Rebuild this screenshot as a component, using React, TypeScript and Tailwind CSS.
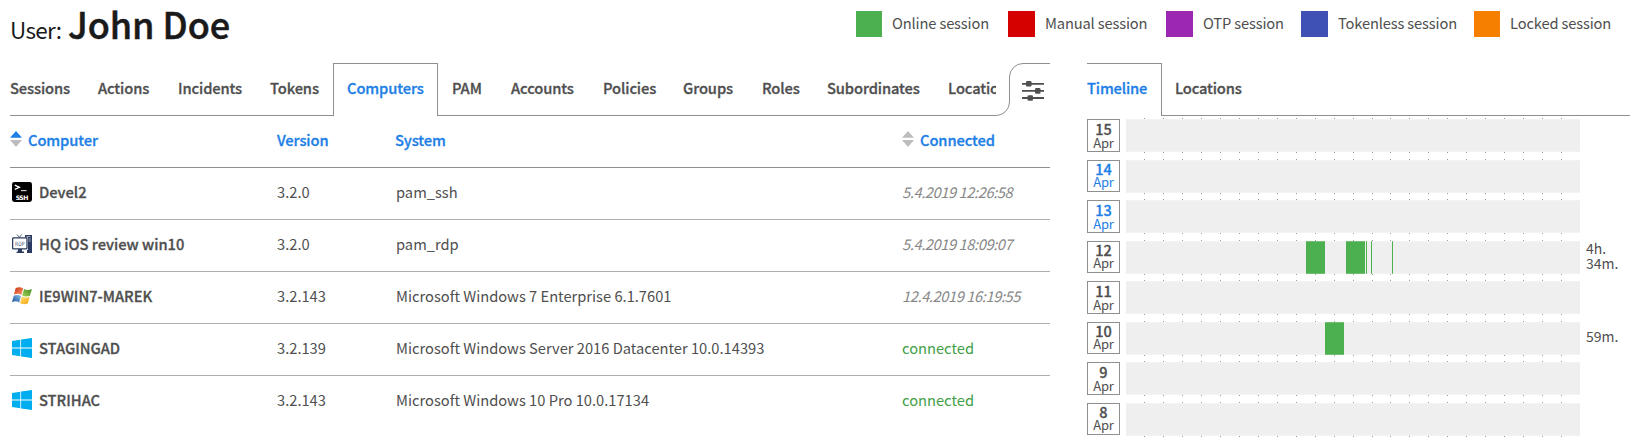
import type { ReactNode } from "react";

const legend = [
  { label: "Online session", color: "bg-[#4caf50]", box: "w-[26px]", cell: "w-[152px]" },
  { label: "Manual session", color: "bg-[#d50000]", box: "w-[27px]", cell: "w-[158px]" },
  { label: "OTP session", color: "bg-[#9c27b0]", box: "w-[27px]", cell: "w-[135px]" },
  { label: "Tokenless session", color: "bg-[#3f51b5]", box: "w-[27px]", cell: "w-[173px]" },
  { label: "Locked session", color: "bg-[#f77f00]", box: "w-[26px]", cell: "w-[150px]" },
];

const tabsBefore = [
  { label: "Sessions", cell: "w-[88px]" },
  { label: "Actions", cell: "w-[80px]" },
  { label: "Incidents", cell: "w-[92px]" },
  { label: "Tokens", cell: "w-[63px]" },
];

const tabsAfter = [
  { label: "PAM", cell: "w-[59px]" },
  { label: "Accounts", cell: "w-[92px]" },
  { label: "Policies", cell: "w-[80px]" },
  { label: "Groups", cell: "w-[79px]" },
  { label: "Roles", cell: "w-[65px]" },
  { label: "Subordinates", cell: "w-[121px]" },
];

function SshIcon() {
  return (
    <svg className="h-5 w-5" viewBox="0 0 20 20">
      <rect width="20" height="20" rx="2.4" fill="#000" />
      <path d="M2.8 3.2 7.4 5.3 2.8 7.4" fill="none" stroke="#fff" strokeWidth="1.3" />
      <path d="M9 8.6h5.6" stroke="#ddd" strokeWidth="1.1" />
      <text x="10.1" y="18" textAnchor="middle" fill="#fff" fontSize="6.2" fontWeight="700" textLength="12.6" fontFamily="DejaVu Sans, sans-serif">
        SSH
      </text>
    </svg>
  );
}

function RdpIcon() {
  return (
    <svg className="h-5 w-5" viewBox="0 0 20 20">
      <path d="M13 1h7v18h-5v-3h1V3.6h-3z" fill="#2b3a5e" />
      <path d="M14.5 2.6h4M16.5 5h2.2M16.5 7h2.2" stroke="#c4cbd9" strokeWidth=".8" />
      <path d="M5 .6 7.4 3.4 9.6.6" fill="none" stroke="#53607c" strokeWidth="1" />
      <rect x=".6" y="3.9" width="14.4" height="11" rx="1" fill="#fff" stroke="#2b3a5e" strokeWidth="1.3" />
      <path d="M6 15h4v2.4h2V19H4.6v-1.600H6z" fill="#2b3a5e" />
      <text x="7.8" y="11.8" textAnchor="middle" fill="#4b5878" fontSize="6" fontWeight="400" stroke="none" textLength="9.4" lengthAdjust="spacingAndGlyphs" fontFamily="DejaVu Sans, sans-serif">
        RDP
      </text>
    </svg>
  );
}

function Win7Icon() {
  return (
    <svg className="h-5 w-5" viewBox="0 0 20 20">
      <defs>
        <linearGradient id="w7r" x1="0" y1="0" x2="1" y2="1">
          <stop offset="0" stopColor="#cf2a10" />
          <stop offset="1" stopColor="#f6a070" />
        </linearGradient>
        <linearGradient id="w7g" x1="1" y1="0" x2="0" y2="1">
          <stop offset="0" stopColor="#3f8a1c" />
          <stop offset="1" stopColor="#a5d35c" />
        </linearGradient>
        <linearGradient id="w7b" x1="0" y1="1" x2="1" y2="0">
          <stop offset="0" stopColor="#174f97" />
          <stop offset="1" stopColor="#8cc3ee" />
        </linearGradient>
        <linearGradient id="w7y" x1="0" y1="0" x2="1" y2="1">
          <stop offset="0" stopColor="#ffe278" />
          <stop offset="1" stopColor="#f3a40c" />
        </linearGradient>
      </defs>
      <path d="M3.7 2.1C6.3.8 8.7.8 11.2 2.4L9.3 9C6.9 7.5 4.4 7.6 1.9 8.7z" fill="url(#w7r)" />
      <path d="M12.1 2.900C14.5 4.300 17 4.200 19.900 3L18 9.700C15.500 10.800 12.800 10.900 10.200 9.500z" fill="url(#w7g)" />
      <path d="M1.700 9.700C4.200 8.600 6.700 8.600 9 10L7.200 16.500C4.800 15 2.500 15.100 0 16.200z" fill="url(#w7b)" />
      <path d="M9.900 10.600C12.400 11.900 15 11.800 17.700 10.700L15.800 17.400C13.200 18.600 10.500 18.500 8 17z" fill="url(#w7y)" />
    </svg>
  );
}

function Win10Icon() {
  return (
    <svg className="h-5 w-5" viewBox="0 0 20 20" fill="#00adef">
      <path d="M0 2.900 8.300 1.700V9.500H0zM9.100 1.600 20 0V9.500H9.100zM0 10.500H8.300V18.300L0 17.100zM9.100 10.500H20V20L9.100 18.400z" />
    </svg>
  );
}

function SortIcon({ active }: { active?: boolean }) {
  return (
    <svg className="mt-px h-4 w-3" viewBox="0 0 12 16">
      <path d="M6 0 12 6.800H0z" fill={active ? "#1e80e6" : "#bdbdbd"} />
      <path d="M0 9H12L6 16z" fill="#bdbdbd" />
    </svg>
  );
}

interface Computer {
  icon: ReactNode;
  name: string;
  version: string;
  system: string;
  connected: string;
  online?: boolean;
}

const computers: Computer[] = [
  { icon: <SshIcon />, name: "Devel2", version: "3.2.0", system: "pam_ssh", connected: "5.4.2019 12:26:58" },
  { icon: <RdpIcon />, name: "HQ iOS review win10", version: "3.2.0", system: "pam_rdp", connected: "5.4.2019 18:09:07" },
  { icon: <Win7Icon />, name: "IE9WIN7-MAREK", version: "3.2.143", system: "Microsoft Windows 7 Enterprise 6.1.7601", connected: "12.4.2019 16:19:55" },
  { icon: <Win10Icon />, name: "STAGINGAD", version: "3.2.139", system: "Microsoft Windows Server 2016 Datacenter 10.0.14393", connected: "connected", online: true },
  { icon: <Win10Icon />, name: "STRIHAC", version: "3.2.143", system: "Microsoft Windows 10 Pro 10.0.17134", connected: "connected", online: true },
];

interface Day {
  day: number;
  weekend?: boolean;
  sessions: [number, number][];
  total: string[];
}

const days: Day[] = [
  { day: 15, sessions: [], total: [] },
  { day: 14, weekend: true, sessions: [], total: [] },
  { day: 13, weekend: true, sessions: [], total: [] },
  { day: 12, sessions: [[180, 19], [220, 19], [240, 1], [245, 1], [266, 1]], total: ["4h.", "34m."] },
  { day: 11, sessions: [], total: [] },
  { day: 10, sessions: [[199, 19]], total: ["59m."] },
  { day: 9, sessions: [], total: [] },
  { day: 8, sessions: [], total: [] },
];

function DayChart({ sessions }: { sessions: [number, number][] }) {
  const hours = Array.from({ length: 23 }, (_, i) => Math.round(18 + i * 18.96));
  return (
    <svg className="h-[35px] w-[454px]" viewBox="0 0 454 35" shapeRendering="crispEdges">
      <rect y="1" width="454" height="33" fill="#f3f3f3" />
      <rect y="2" width="454" height="31" fill="#efefef" />
      {hours.map((x) => (
        <g key={x} fill="#999">
          <rect x={x} y="0" width="1" height="1" />
          <rect x={x} y="34" width="1" height="1" />
        </g>
      ))}
      {sessions.map(([x, w]) => (
        <g key={x}>
          <rect x={x} y="1" width={w} height="33" fill="#70bf73" />
          <rect x={x} y="2" width={w} height="31" fill="#4caf50" />
        </g>
      ))}
    </svg>
  );
}

export default function App() {
  return (
    <div className="h-[443px] w-[1633px] overflow-hidden bg-white pl-[10px] font-['Noto_Sans_CJK_SC','Noto_Sans',sans-serif] text-[14.7px] leading-[20px] whitespace-nowrap text-[#4f4f4f]">
      <header className="flex h-[63px]">
        <h1 className="flex w-[846px] items-baseline pt-[3px] text-[#1a1a1a]">
          <span className="w-[58px] text-[22.5px] leading-[40px] tracking-[-0.7px]">User:</span>
          <span className="text-[36px] leading-[40px] font-medium tracking-[-0.05px] [-webkit-text-stroke:0.5px_#1a1a1a]">John Doe</span>
        </h1>
        <div className="flex pt-[11px]">
          {legend.map((l) => (
            <div key={l.label} className={`flex h-[26px] shrink-0 gap-[10px] ${l.cell}`}>
              <span className={`h-[26px] shrink-0 ${l.box} ${l.color}`} />
              <span className="pt-[2px] tracking-[-0.15px]">{l.label}</span>
            </div>
          ))}
        </div>
      </header>

      <div className="flex">
        <main className="w-[1040px]">
          <nav className="flex h-[53px] font-medium tracking-[-0.1px] [-webkit-text-stroke:0.3px]">
            {tabsBefore.map((t) => (
              <div key={t.label} className={`shrink-0 border-b border-[#8f8f8f] pt-[15px] ${t.cell}`}>
                {t.label}
              </div>
            ))}
            <div className="w-[105px] shrink-0 border border-b-0 border-[#8f8f8f] pt-[14px] pl-[13px] text-[#1e80e6]">Computers</div>
            <div className="flex w-[558px] shrink-0 overflow-hidden border-b border-[#8f8f8f] pt-[15px] pl-[14px]">
              {tabsAfter.map((t) => (
                <div key={t.label} className={`shrink-0 ${t.cell}`}>
                  {t.label}
                </div>
              ))}
              <div className="w-[48px] shrink-0 overflow-hidden">Locations</div>
            </div>
            <svg className="h-[53px] w-[54px] shrink-0" viewBox="0 0 54 53">
              <path d="M0 52.500A13.500 13.500 0 0 0 13.500 39V14A13.500 13.500 0 0 1 27 .500H54" fill="none" stroke="#8f8f8f" />
              <g stroke="#4f4f4f" strokeWidth="1.800">
                <path d="M26 20.800H48M26 27.900H48M26 35H48" />
              </g>
              <g fill="#4f4f4f">
                <rect x="30" y="18" width="5.500" height="5.600" rx="1.300" />
                <rect x="39" y="25.100" width="5.500" height="5.600" rx="1.300" />
                <rect x="31.500" y="32.200" width="5.500" height="5.600" rx="1.300" />
              </g>
            </svg>
          </nav>

          <div className="grid h-[52px] grid-cols-[267px_118px_507px_148px] border-b border-[#8f8f8f] pt-[14px] font-medium tracking-[-0.1px] text-[#1e80e6] [-webkit-text-stroke:0.3px]">
            <div className="flex gap-[6px]">
              <SortIcon active />
              Computer
            </div>
            <div>Version</div>
            <div>System</div>
            <div className="flex gap-[6px]">
              <SortIcon />
              Connected
            </div>
          </div>

          {computers.map((c, i) => (
            <div
              key={c.name}
              className={`grid h-[52px] grid-cols-[267px_118px_507px_148px] pt-[14px] ${i < computers.length - 1 ? "border-b border-[#adadad]" : ""}`}
            >
              <div className="flex gap-[7px] pl-[2px]">
                {c.icon}
                <span className="font-medium [-webkit-text-stroke:0.3px]">{c.name}</span>
              </div>
              <div>{c.version}</div>
              <div className="pl-px">{c.system}</div>
              <div className={c.online ? "text-[#43a047]" : "tracking-[-0.42px] text-[#888] italic"}>{c.connected}</div>
            </div>
          ))}
        </main>

        <aside className="ml-[37px] w-[543px]">
          <nav className="flex h-[53px] font-medium tracking-[-0.15px] [-webkit-text-stroke:0.3px]">
            <div className="w-[75px] border-t border-r border-[#8f8f8f] pt-[14px] text-[#1e80e6]">Timeline</div>
            <div className="w-[468px] border-b border-[#8f8f8f] pt-[15px] pl-[13px]">Locations</div>
          </nav>
          <div className="grid auto-rows-[40.5px] pt-[2px]">
            {days.map((d, i) => (
              <div key={d.day} className="flex">
                <div
                  className={`mt-px flex w-[33px] flex-col items-center border border-[#8f8f8f] leading-[13.500px] ${i % 2 ? "h-[32px] pt-px" : "h-[33px] pt-[2px]"} ${d.weekend ? "text-[#1e80e6]" : ""}`}
                >
                  <span className="text-[14.5px] font-medium [-webkit-text-stroke:0.3px]">{d.day}</span>
                  <span className="text-[13px] tracking-[-0.2px]">Apr</span>
                </div>
                <div className="ml-[6px] w-[454px]">
                  <DayChart sessions={d.sessions} />
                </div>
                <div className="ml-[6px] flex h-[32px] flex-col justify-center text-[14px] leading-[15px]">
                  {d.total.map((t) => (
                    <span key={t}>{t}</span>
                  ))}
                </div>
              </div>
            ))}
          </div>
        </aside>
      </div>
    </div>
  );
}
